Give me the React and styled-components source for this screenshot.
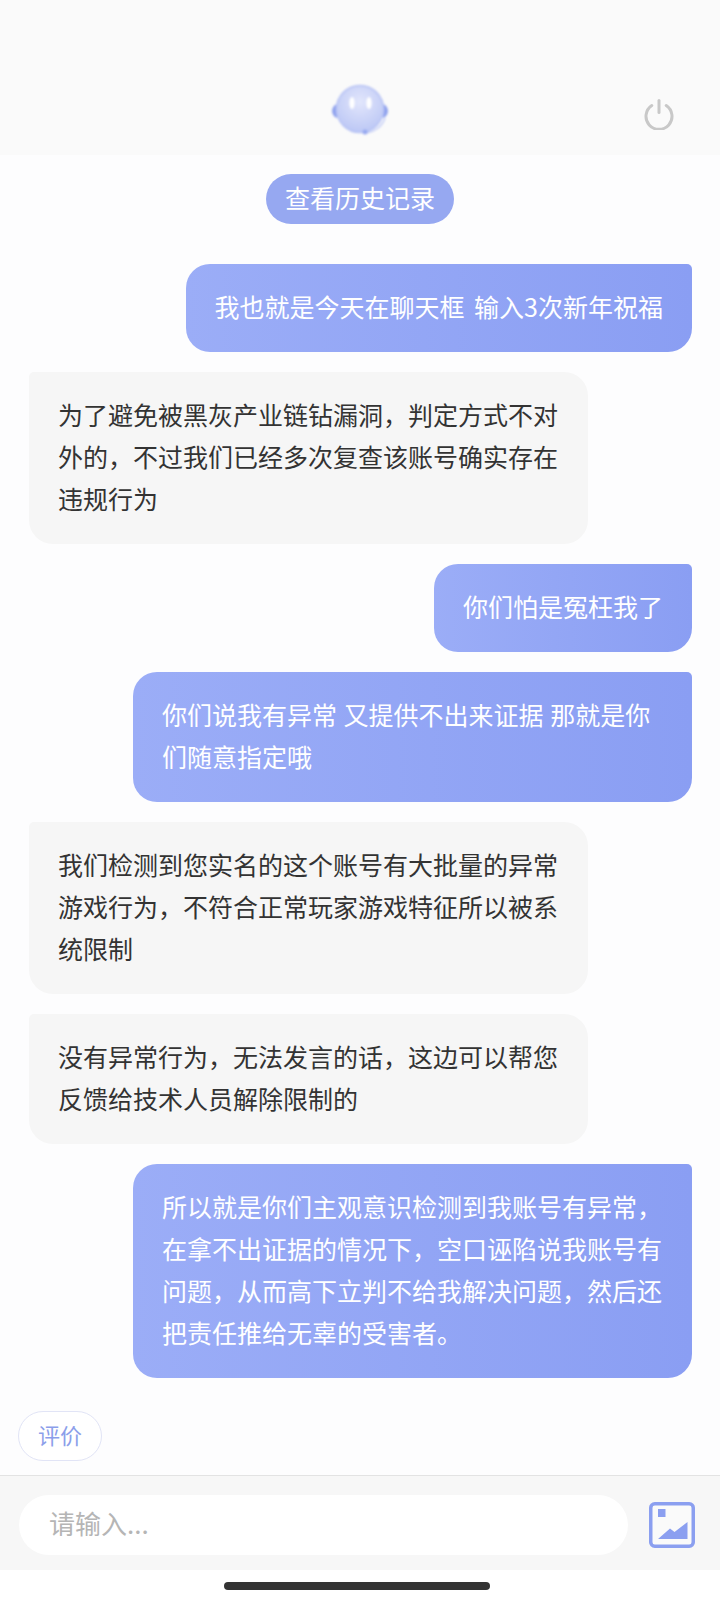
import React from "react";
import styled, { createGlobalStyle } from "styled-components";

const GlobalStyle = createGlobalStyle`
  html, body {
    margin: 0;
    padding: 0;
    background: #fdfdfe;
  }
  * {
    box-sizing: border-box;
  }
`;

const Page = styled.div`
  width: 720px;
  height: 1600px;
  display: flex;
  flex-direction: column;
  background: #fdfdfe;
  font-family: "Noto Sans CJK SC", "Noto Sans", sans-serif;
  overflow: hidden;
`;

const Header = styled.header`
  height: 155px;
  flex-shrink: 0;
  padding-top: 82px;
  display: flex;
  justify-content: space-between;
  align-items: flex-start;
  background: #fafafa;
  padding-left: 330px;
  padding-right: 45px;
`;

const PowerButton = styled.div`
  width: 32px;
  height: 32px;
  margin-top: 16px;
`;

const Content = styled.main`
  flex: 1;
  display: flex;
  flex-direction: column;
  padding: 19px 28px 0 29px;
`;

const HistoryButton = styled.div`
  align-self: flex-start;
  margin-left: 237px;
  margin-bottom: 40px;
  width: 188px;
  height: 50px;
  border-radius: 25px;
  background: #96a8f1;
  color: #fff;
  font-size: 25px;
  line-height: 47px;
  text-align: center;
`;

const Messages = styled.div`
  display: flex;
  flex-direction: column;
  gap: 20px;
`;

const Bubble = styled.div`
  padding: 21px 29px 25px;
  font-size: 25px;
  line-height: 42px;
  word-spacing: ${(p) => p.$wordGap || 1}px;
  ${(p) =>
    p.$mine
      ? `
    align-self: flex-end;
    max-width: 559px;
    color: #fff;
    background: linear-gradient(90deg, #9badf7 0%, #8a9ef3 100%);
    border-radius: 24px 5px 24px 24px;
  `
      : `
    align-self: flex-start;
    width: 559px;
    color: #333;
    background: #f6f6f6;
    border-radius: 5px 24px 24px 24px;
  `}
`;

const RateButton = styled.div`
  align-self: flex-start;
  margin-top: 33px;
  margin-left: -11px;
  width: 84px;
  height: 50px;
  border: 1px solid #e1e4f6;
  border-radius: 25px;
  color: #8b9eea;
  background: #fff;
  font-size: 22px;
  line-height: 44px;
  text-align: center;
`;

const InputBar = styled.footer`
  height: 95px;
  flex-shrink: 0;
  display: flex;
  align-items: center;
  gap: 21px;
  padding: 4px 25px 0 19px;
  background: #f7f7f7;
  border-top: 1px solid #e3e3e3;
`;

const InputBox = styled.div`
  flex: 1;
  height: 60px;
  border-radius: 30px;
  background: #fff;
  color: #b5b5b5;
  font-size: 26px;
  line-height: 56px;
  padding-left: 30px;
`;

const HomeArea = styled.div`
  height: 30px;
  flex-shrink: 0;
  display: flex;
  justify-content: center;
  padding: 12px 6px 0 0;
  background: #fff;
`;

const HomeBar = styled.div`
  width: 266px;
  height: 8px;
  border-radius: 4px;
  background: #333;
`;

const Robot = () => (
  <svg width="60" height="56" viewBox="0 0 60 56">
    <defs>
      <radialGradient id="head" cx="0.5" cy="0.35" r="0.7">
        <stop offset="0" stopColor="#e2e6fb" />
        <stop offset="1" stopColor="#b9c5f5" />
      </radialGradient>
      <filter id="soft">
        <feGaussianBlur stdDeviation="1" />
      </filter>
    </defs>
    <g filter="url(#soft)">
      <path d="M7 22c-3 1-5 4-5 7s2 6 5 7z" fill="#8fa2ee" />
      <path d="M53 22c3 1 5 4 5 7s-2 6-5 7z" fill="#8fa2ee" />
      <circle cx="30" cy="27" r="23.5" fill="url(#head)" stroke="#b7c3f4" strokeWidth="1.5" />
      <ellipse cx="22" cy="21" rx="2.6" ry="6" fill="#fff" />
      <ellipse cx="39" cy="21" rx="2.6" ry="6" fill="#fff" />
      <path d="M55 36c-3 9-11 14-19 15" fill="none" stroke="#c2ccf6" strokeWidth="1.5" />
      <circle cx="35" cy="50" r="2.5" fill="#97a9f0" />
    </g>
  </svg>
);

const PowerIcon = () => (
  <svg width="32" height="32" viewBox="0 0 32 32" fill="none" stroke="#c8c8c8" strokeWidth="3" strokeLinecap="round">
    <path d="M8.8 7.5a13 13 0 1 0 14.4 0" />
    <path d="M16 2.5v12" />
  </svg>
);

const ImageIcon = () => (
  <svg width="46" height="46" viewBox="0 0 46 46">
    <rect x="1.75" y="1.75" width="42.5" height="42.5" rx="4" fill="#fafafa" stroke="#8b9ff0" strokeWidth="3.5" />
    <rect x="9" y="7" width="7.5" height="8" fill="#8b9ff0" />
    <path d="M9 37l12-10.5 4.5 3.5 13-10v17z" fill="#8b9ff0" />
  </svg>
);

const messages = [
  { mine: true, wordGap: 4, text: "我也就是今天在聊天框 输入3次新年祝福" },
  { text: "为了避免被黑灰产业链钻漏洞，判定方式不对外的，不过我们已经多次复查该账号确实存在违规行为" },
  { mine: true, text: "你们怕是冤枉我了" },
  { mine: true, text: "你们说我有异常 又提供不出来证据 那就是你们随意指定哦" },
  { text: "我们检测到您实名的这个账号有大批量的异常游戏行为，不符合正常玩家游戏特征所以被系统限制" },
  { text: "没有异常行为，无法发言的话，这边可以帮您反馈给技术人员解除限制的" },
  { mine: true, text: "所以就是你们主观意识检测到我账号有异常，在拿不出证据的情况下，空口诬陷说我账号有问题，从而高下立判不给我解决问题，然后还把责任推给无辜的受害者。" },
];

export default function App() {
  return (
    <Page>
      <GlobalStyle />
      <Header>
        <Robot />
        <PowerButton>
          <PowerIcon />
        </PowerButton>
      </Header>
      <Content>
        <HistoryButton>查看历史记录</HistoryButton>
        <Messages>
          {messages.map((m, i) => (
            <Bubble key={i} $mine={m.mine} $wordGap={m.wordGap}>
              {m.text}
            </Bubble>
          ))}
        </Messages>
        <RateButton>评价</RateButton>
      </Content>
      <InputBar>
        <InputBox>请输入...</InputBox>
        <ImageIcon />
      </InputBar>
      <HomeArea>
        <HomeBar />
      </HomeArea>
    </Page>
  );
}
